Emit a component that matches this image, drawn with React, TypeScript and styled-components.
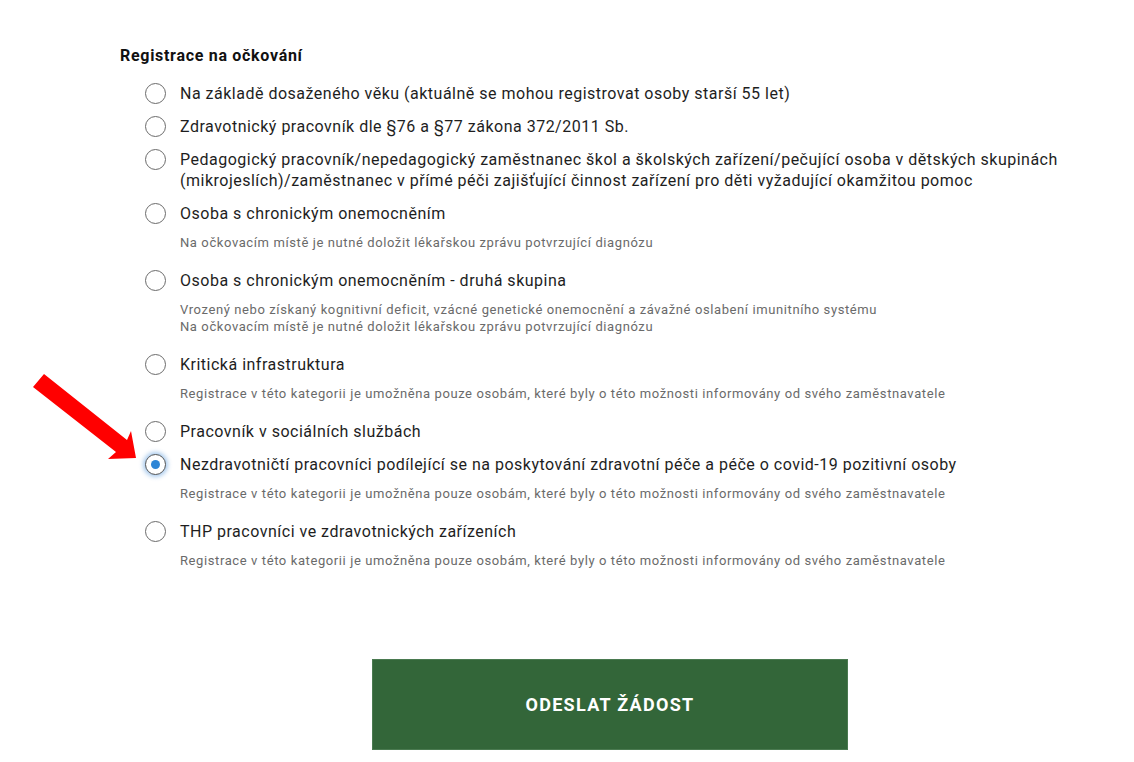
import React from "react";
import styled, { createGlobalStyle } from "styled-components";

const Global = createGlobalStyle`
  html, body { margin: 0; padding: 0; background: #fff; }
  body { font-family: Roboto, "Liberation Sans", Arial, sans-serif; color: #1e1e1e; }
  * { box-sizing: border-box; }
`;

const Page = styled.div`
  position: relative;
  width: 1134px;
  min-height: 762px;
  padding: 45px 0 0 120px;
`;

const Form = styled.form`
  width: 980px;
  display: flex;
  flex-direction: column;
`;

const Title = styled.h2`
  margin: 0 0 16px 0;
  font-size: 16px;
  line-height: 22px;
  font-weight: 700;
  letter-spacing: 0.7px;
  color: #111;
`;

const List = styled.div`
  display: flex;
  flex-direction: column;
  gap: 12px;
  padding-left: 25px;
`;

const Option = styled.label<{ $hasHint?: boolean }>`
  display: grid;
  grid-template-columns: 20px 1fr;
  column-gap: 15px;
  align-items: start;
  cursor: pointer;
  margin-bottom: ${(p) => (p.$hasHint ? "7px" : "0")};
`;

const Radio = styled.span<{ $checked?: boolean }>`
  width: 21px;
  height: 21px;
  border-radius: 50%;
  border: 1.5px solid ${(p) => (p.$checked ? "#555" : "#6b6b6b")};
  background: #fff;
  display: flex;
  align-items: center;
  justify-content: center;
  box-shadow: ${(p) => (p.$checked ? "0 0 4px 2px rgba(66,139,214,0.45)" : "none")};
  &::after {
    content: "";
    width: 9px;
    height: 9px;
    border-radius: 50%;
    background: ${(p) => (p.$checked ? "#2e86d6" : "transparent")};
  }
`;

const Text = styled.div`
  display: flex;
  flex-direction: column;
`;

const Label = styled.span`
  font-size: 16px;
  line-height: 21px;
  letter-spacing: 0.5px;
  color: #1e1e1e;
`;

const Hint = styled.span<{ $first?: boolean }>`
  font-size: 13px;
  line-height: 17px;
  letter-spacing: 0.6px;
  color: #6a6a6a;
  margin-top: ${(p) => (p.$first ? "10px" : "0")};
`;

const ButtonRow = styled.div`
  display: flex;
  justify-content: center;
  margin-top: 83px;
`;

const Submit = styled.button`
  width: 476px;
  height: 91px;
  background: #336639;
  border: 1px solid #4a7a50;
  color: #fff;
  font-family: inherit;
  font-size: 18px;
  font-weight: 700;
  letter-spacing: 1.3px;
  cursor: pointer;
`;

const Arrow = styled.svg`
  position: absolute;
  left: 0;
  top: 0;
  pointer-events: none;
`;

type Opt = { label: string; hints?: string[]; checked?: boolean };

const reg =
  "Registrace v této kategorii je umožněna pouze osobám, které byly o této možnosti informovány od svého zaměstnavatele";
const lek = "Na očkovacím místě je nutné doložit lékařskou zprávu potvrzující diagnózu";

const options: Opt[] = [
  { label: "Na základě dosaženého věku (aktuálně se mohou registrovat osoby starší 55 let)" },
  { label: "Zdravotnický pracovník dle §76 a §77 zákona 372/2011 Sb." },
  {
    label:
      "Pedagogický pracovník/nepedagogický zaměstnanec škol a školských zařízení/pečující osoba v dětských skupinách (mikrojeslích)/zaměstnanec v přímé péči zajišťující činnost zařízení pro děti vyžadující okamžitou pomoc",
  },
  { label: "Osoba s chronickým onemocněním", hints: [lek] },
  {
    label: "Osoba s chronickým onemocněním - druhá skupina",
    hints: [
      "Vrozený nebo získaný kognitivní deficit, vzácné genetické onemocnění a závažné oslabení imunitního systému",
      lek,
    ],
  },
  { label: "Kritická infrastruktura", hints: [reg] },
  { label: "Pracovník v sociálních službách" },
  {
    label: "Nezdravotničtí pracovníci podílející se na poskytování zdravotní péče a péče o covid-19 pozitivní osoby",
    hints: [reg],
    checked: true,
  },
  { label: "THP pracovníci ve zdravotnických zařízeních", hints: [reg] },
];

export default function App() {
  return (
    <Page>
      <Global />
      <Form onSubmit={(e) => e.preventDefault()}>
        <Title>Registrace na očkování</Title>
        <List>
          {options.map((o, i) => (
            <Option key={i} $hasHint={!!o.hints}>
              <Radio $checked={o.checked} />
              <Text>
                <Label>{o.label}</Label>
                {o.hints?.map((h, j) => (
                  <Hint key={j} $first={j === 0}>
                    {h}
                  </Hint>
                ))}
              </Text>
            </Option>
          ))}
        </List>
        <ButtonRow>
          <Submit type="submit">ODESLAT ŽÁDOST</Submit>
        </ButtonRow>
      </Form>
      <Arrow width="1134" height="762" viewBox="0 0 1134 762">
        <polygon
          points="44,374 127,440 131,431 136,458 108,459 116,452 33,387"
          fill="#ff0000"
        />
      </Arrow>
    </Page>
  );
}
